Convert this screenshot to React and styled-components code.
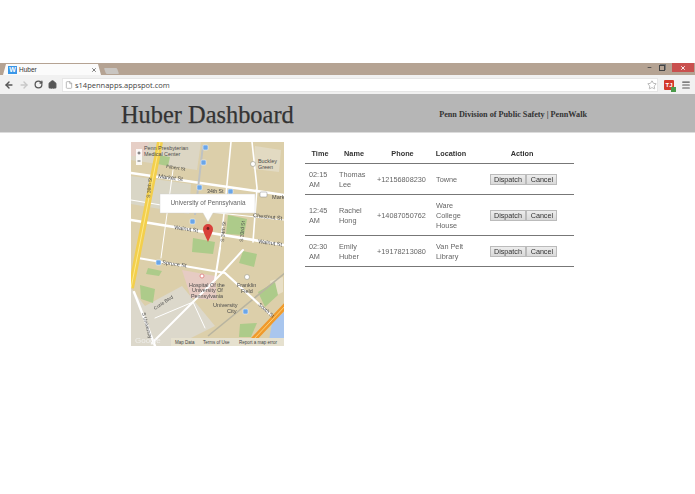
import React from "react";
import styled, { createGlobalStyle } from "styled-components";
import { ArrowLeft, ArrowRight, RotateCw, Home, Star, Menu, File, Minus, X } from "lucide-react";

const GlobalStyle = createGlobalStyle`
    html, body { margin: 0; padding: 0; background: #fff; }
    body { font-family: "Liberation Sans", Arial, sans-serif; }
`

const Page = styled.div`
    width: 695px;
    height: 494px;
    padding-top: 63px;
    box-sizing: border-box;
    overflow: hidden;
    filter: blur(0.3px);
`
const TabStrip = styled.div`
    height: 12px;
    background: #b5a393;
    display: flex;
    align-items: flex-end;
    padding-left: 3px;
`
const Tab = styled.div`
    width: 98px;
    height: 11px;
    background: #fbfbfb;
    clip-path: polygon(0 100%, 3px 0, 95px 0, 100% 100%);
    display: flex;
    align-items: center;
    padding: 0 4px 0 5px;
    box-sizing: border-box;
    font-size: 6.5px;
    color: #333;
`
const Favicon = styled.span`
    width: 9px;
    height: 8px;
    background: #3a97e8;
    color: #fff;
    font-size: 7px;
    font-weight: bold;
    line-height: 8px;
    text-align: center;
    margin-right: 2px;
`
const TabTitle = styled.span`
    flex: 1;
`
const NewTab = styled.div`
    width: 13px;
    height: 6px;
    margin-left: 4px;
    margin-bottom: 1px;
    background: #c9c5c1;
    border-radius: 1px;
    transform: skewX(20deg);
`
const WindowButtons = styled.div`
    margin-left: auto;
    height: 100%;
    display: flex;
    align-items: flex-start;
    gap: 7px;
    color: #444;
`
const CloseButton = styled.div`
    width: 22px;
    height: 9px;
    background: #c9504e;
    color: #fff;
    display: flex;
    align-items: center;
    justify-content: center;
    margin-right: 1px;
`
const WinIcon = styled.div`
    height: 9px;
    display: flex;
    align-items: center;
`
const Restore = styled.div`
    width: 4px;
    height: 4px;
    border: 1px solid #444;
    box-shadow: 1px -1px 0 #777;
`
const Toolbar = styled.div`
    height: 19px;
    background: #f1f1f1;
    display: flex;
    align-items: center;
    padding-left: 4px;
    color: #555;
    gap: 5px;
`
const Omnibox = styled.div`
    width: 596px;
    height: 14px;
    background: #fff;
    border: 1px solid #e6e6e6;
    box-sizing: border-box;
    display: flex;
    align-items: center;
    padding: 0 0 0 2px;
    gap: 2px;
    font-family: "Open Sans", sans-serif;
    font-size: 7.5px;
    color: #444;
`
const Url = styled.span`
    flex: 1;
`
const ExtBadge = styled.div`
    position: relative;
    width: 10px;
    height: 10px;
    margin-left: 1px;
    margin-right: 2px;
    background: #d3392c;
    color: #fff;
    font-size: 6px;
    font-weight: bold;
    line-height: 10px;
    text-align: center;
    border-radius: 1px;
    &::after {
        content: "";
        position: absolute;
        right: -2px;
        bottom: -2px;
        width: 5px;
        height: 5px;
        background: #4a9a4a;
    }
`
const Header = styled.header`
    height: 39px;
    background: #b6b6b6;
    border-bottom: 1px solid #dcdcdc;
    display: flex;
    align-items: center;
    justify-content: space-between;
    padding: 3px 108px 0 121px;
    box-sizing: border-box;
`
const Title = styled.h1`
    margin: 0;
    font-family: "Liberation Serif", serif;
    font-weight: normal;
    font-size: 24.4px;
    color: #333;
    -webkit-text-stroke: 0.25px #333;
`
const Subtitle = styled.div`
    font-family: "Liberation Serif", serif;
    font-weight: bold;
    font-size: 8.2px;
    color: #333;
`
const Content = styled.main`
    display: flex;
    align-items: flex-start;
    gap: 21px;
    padding: 9px 0 0 131px;
`
const MapFrame = styled.svg`
    display: block;
    flex: none;
    width: 153px;
    height: 204px;
`
const Table = styled.table`
    width: 269px;
    table-layout: fixed;
    border-collapse: collapse;
    font-size: 7.3px;
    line-height: 10px;
    color: #666;
`
const Th = styled.th`
    width: ${(p) => p.$width}px;
    height: 21px;
    padding: 3px 0 0;
    font-weight: bold;
    color: #333;
    text-align: center;
    border-bottom: 1px solid #777;
    box-sizing: border-box;
`
const Td = styled.td`
    padding: 6px 4px 4px;
    text-align: left;
    vertical-align: middle;
    border-bottom: 1px solid #777;
    box-sizing: border-box;
`
const Button = styled.button`
    height: 11px;
    padding: 0 3.4px;
    margin: 0;
    border: 1px solid #bbb;
    background: linear-gradient(#ededed, #d9d9d9);
    font-family: "Liberation Sans", Arial, sans-serif;
    font-size: 7.2px;
    line-height: 8px;
    color: #333;
    box-sizing: border-box;
`
const ButtonRow = styled.div`
    display: flex;
    justify-content: center;
    padding-left: 3px;
`

const rows = [
    { time: "02:15 AM", name: "Thomas Lee", phone: "+12156808230", location: "Towne" },
    { time: "12:45 AM", name: "Rachel Hong", phone: "+14087050762", location: "Ware College House" },
    { time: "02:30 AM", name: "Emily Huber", phone: "+19178213080", location: "Van Pelt Library" },
];

const columns = [
    ["Time", 30],
    ["Name", 38],
    ["Phone", 59],
    ["Location", 38],
    ["Action", 104],
];

const mapLabels = [
    ["Penn Presbyterian", 13, 8, 5.4],
    ["Medical Center", 13, 13.5, 5.4],
    ["Buckley", 127, 21, 5.4],
    ["Green", 127, 27, 5.4],
    ["Filbert St", 35, 26, 4.8, 8],
    ["Market St", 27, 36, 5.8, 7],
    ["34th St", 76, 51, 5.2],
    ["Mark", 141, 57, 5.6],
    ["Chestnut St", 122, 75, 5.6, 6],
    ["Walnut St", 43, 87, 5.6, 8],
    ["Walnut St", 127, 101, 5.6, 8],
    ["Spruce St", 31, 122, 5.6, 8],
    ["Franklin", 106, 144.5, 5.4],
    ["Field", 110, 150.5, 5.4],
    ["University", 82, 165, 5.6],
    ["City", 96, 171, 5.6],
    ["S 38th St", 19, 56, 5, -85],
    ["S 34th St", 93, 100, 5, -85],
    ["S 33rd St", 112, 100, 5, -85],
    ["Curie Blvd", 24, 168, 4.8, -33],
    ["South St", 127, 163, 5, 42],
    ["S University", 11, 171, 5, 75],
    ["Hospital Of the", 58, 144.5, 5.4],
    ["University Of", 61, 150, 5.4],
    ["Pennsylvania", 60, 155.5, 5.4],
];

const transitStops = [[72, 3], [70, 18], [66, 43], [97, 47], [59, 77], [25, 118], [112, 167]];

const parks = [
    "M27 13L39 15L37 24L26 22Z",
    "M97 73L116 77L113 93L95 92Z",
    "M62 96L84 100L82 112L61 110Z",
    "M112 109L126 112L123 125L108 121Z",
    "M9 143L24 147L22 161L10 157Z",
    "M17 126L31 129L28 134L15 132Z",
    "M127 150L144 140L147 153L134 165Z",
    "M109 182L126 181L120 195L108 195Z",
];

function CampusMap() {
    return (
        <MapFrame viewBox="0 0 153 204" fontFamily="Liberation Sans, sans-serif">
            <rect width="153" height="204" fill="#dccfaa" />
            <path d="M0 0H70L66 28L0 18Z" fill="#dcd6c4" />
            <path d="M0 0H18L14 14H0Z" fill="#e6cfc6" />
            <path d="M0 34L60 42L58 72L0 62Z" fill="#d9d6c6" />
            <path d="M124 4L150 8L148 30L122 27Z" fill="#e2dac2" />
            <path d="M0 146L14 164L51 144L84 184L44 204H0Z" fill="#dcd8cb" />
            <path d="M51 128L84 134L86 158L60 156Z" fill="#e6cbc3" />
            <path d="M139 139L152 135V150L142 155Z" fill="#e8dfc6" />
            {parks.map((d) => (
                <path key={d} d={d} fill="#adcb8a" />
            ))}
            <path d="M141 181L153 170V204H137Z" fill="#a9c6ee" />
            <path d="M77 194L154 131" stroke="#b8b4a0" strokeWidth="1.6" fill="none" />
            <g stroke="#fff" fill="none" strokeLinecap="round">
                <path d="M0 31L153 53" strokeWidth="2.6" />
                <path d="M0 78L153 103" strokeWidth="2.6" />
                <path d="M7 116L94 131L141 174" strokeWidth="2.2" />
                <path d="M0 58L60 68L153 78" strokeWidth="1.2" />
                <path d="M89 106L84 138" strokeWidth="2" />
                <path d="M112 108L91 131L21 201" strokeWidth="2" />
                <path d="M3 150L24 204" strokeWidth="2.4" />
                <path d="M121 0L126 46L122 100" strokeWidth="1.6" />
                <path d="M100 0L94 63L89 106" strokeWidth="1.6" />
                <path d="M42 28L30 116" strokeWidth="1" />
                <path d="M24 176L62 160L74 186" strokeWidth="1" />
            </g>
            <path d="M72 3L64 73" stroke="#bfc2c2" strokeWidth="2" fill="none" />
            <path d="M29 0L9 101L0 146" stroke="#f3cf4c" strokeWidth="6" fill="none" />
            <path d="M29 0L9 101L0 146" stroke="#fbe88c" strokeWidth="1" fill="none" />
            <path d="M156 162L122 198L118 204" stroke="#f09a2c" strokeWidth="5.5" fill="none" />
            <path d="M156 162L122 198L118 204" stroke="#fbd27a" strokeWidth="1" fill="none" />
            {transitStops.map(([x, y]) => (
                <rect key={`${x}-${y}`} x={x} y={y} width="5" height="5" rx="1" fill="#6aa6e8" stroke="#e8f0fa" strokeWidth=".6" />
            ))}
            <rect x="129" y="50" width="7" height="5" rx="1" fill="#fff" stroke="#888" strokeWidth=".5" />
            <circle cx="122" cy="22" r="2.5" fill="#fff" stroke="#998" strokeWidth=".6" />
            <circle cx="116" cy="135" r="2.5" fill="#fff" stroke="#998" strokeWidth=".6" />
            <circle cx="71" cy="134" r="2" fill="#fff" stroke="#d77" strokeWidth=".8" />
            {mapLabels.map(([label, x, y, size, angle]) => (
                <text
                    key={`${label}-${y}`}
                    x={x}
                    y={y}
                    fontSize={size}
                    fill="#4a4a4a"
                    transform={angle ? `rotate(${angle} ${x} ${y})` : undefined}
                >
                    {label}
                </text>
            ))}
            <rect x="5" y="7" width="6" height="16" fill="#fff" opacity=".85" />
            <path d="M6.5 11H9.5M8 9.5V12.5M6.5 19H9.5" stroke="#555" strokeWidth=".9" />
            <rect y="196" x="40" width="113" height="8" fill="#e6e1cf" />
            <text x="44" y="201.5" fontSize="4.5" fill="#444">Map Data</text>
            <text x="72" y="201.5" fontSize="4.5" fill="#444">Terms of Use</text>
            <text x="108" y="201.5" fontSize="4.5" fill="#444">Report a map error</text>
            <text x="4" y="201" fontSize="8" fill="#f4f4f4" opacity=".75">Google</text>
            <path d="M29 52H124V71H82L77 80L72 71H29Z" fill="#fff" stroke="#ccc" strokeWidth=".4" />
            <text x="39.5" y="62.5" fontSize="6.4" fill="#666">University of Pennsylvania</text>
            <path d="M77 100C74 93 72 90 72 87A5 5 0 0 1 82 87C82 90 80 93 77 100Z" fill="#d8403a" />
            <circle cx="77" cy="86.5" r="1.4" fill="#702020" />
        </MapFrame>
    );
}

function App() {
    return (
        <Page>
            <GlobalStyle />
            <TabStrip>
                <Tab>
                    <Favicon>W</Favicon>
                    <TabTitle>Huber</TabTitle>
                    <X size={6} strokeWidth={3} color="#555" />
                </Tab>
                <NewTab />
                <WindowButtons>
                    <WinIcon><Minus size={5} strokeWidth={4} /></WinIcon>
                    <WinIcon><Restore /></WinIcon>
                    <CloseButton><X size={6} strokeWidth={3.5} /></CloseButton>
                </WindowButtons>
            </TabStrip>
            <Toolbar>
                <ArrowLeft size={10} strokeWidth={3.4} />
                <ArrowRight size={10} strokeWidth={3.4} color="#c8c8c8" />
                <RotateCw size={9} strokeWidth={3.4} />
                <Home size={9} strokeWidth={3} fill="currentColor" />
                <Omnibox>
                    <File size={8} color="#999" />
                    <Url>s14pennapps.appspot.com</Url>
                    <Star size={10} color="#aaa" />
                </Omnibox>
                <ExtBadge>TJ</ExtBadge>
                <Menu size={10} strokeWidth={2.6} />
            </Toolbar>
            <Header>
                <Title>Huber Dashboard</Title>
                <Subtitle>Penn Division of Public Safety | PennWalk</Subtitle>
            </Header>
            <Content>
                <CampusMap />
                <Table>
                    <thead>
                        <tr>
                            {columns.map(([label, width]) => (
                                <Th key={label} $width={width}>{label}</Th>
                            ))}
                        </tr>
                    </thead>
                    <tbody>
                        {rows.map((row) => (
                            <tr key={row.phone}>
                                <Td>{row.time}</Td>
                                <Td>{row.name}</Td>
                                <Td>{row.phone}</Td>
                                <Td>{row.location}</Td>
                                <Td>
                                    <ButtonRow>
                                        <Button>Dispatch</Button>
                                        <Button>Cancel</Button>
                                    </ButtonRow>
                                </Td>
                            </tr>
                        ))}
                    </tbody>
                </Table>
            </Content>
        </Page>
    );
}

export default App;
